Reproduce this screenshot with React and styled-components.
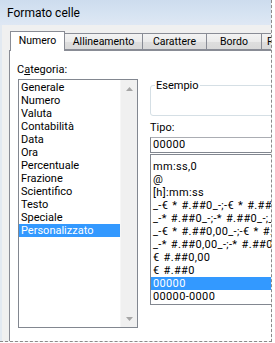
import React from "react";
import styled, { createGlobalStyle } from "styled-components";

const Global = createGlobalStyle`
  html, body { margin: 0; padding: 0; background: #fff; }
  body { font-family: Roboto, "Noto Sans", sans-serif; color: #000; }
  * { box-sizing: border-box; }
`;

const Frame = styled.div`
  width: 272px;
  height: 342px;
  border-right: 1px dashed #8a8a8a;
  border-bottom: 1px dashed #8a8a8a;
  overflow: hidden;
  display: flex;
  flex-direction: column;
  background: #f0f0f0;
`;

const TitleBar = styled.div`
  height: 25px;
  flex: none;
  display: flex;
  align-items: center;
  padding-left: 7px;
  font-size: 12px;
  background: linear-gradient(180deg, #cddcee 0%, #d6e3f2 55%, #dfe8f4 100%);
`;

const Client = styled.div`
  flex: 1;
  display: flex;
  flex-direction: column;
  padding: 6px 0 0 7px;
  border-left: 2px solid #e2e9f1;
  min-height: 0;
`;

const TabRow = styled.div`
  display: flex;
  align-items: flex-end;
  height: 19px;
  padding-left: 1px;
  position: relative;
  z-index: 1;
`;

const Tab = styled.div`
  flex: none;
  width: ${(p) => p.$w}px;
  height: ${(p) => (p.$active ? 20 : 17)}px;
  margin-bottom: ${(p) => (p.$active ? -1 : 0)}px;
  margin-left: ${(p) => (p.$first ? 0 : -1)}px;
  border: 1px solid #898c95;
  border-bottom: ${(p) => (p.$active ? "none" : "1px solid #898c95")};
  background: ${(p) =>
    p.$active
      ? "#fff"
      : "linear-gradient(180deg, #f3f3f3 0%, #ebebeb 50%, #dedede 51%, #d9d9d9 100%)"};
  display: flex;
  align-items: center;
  justify-content: center;
  padding-bottom: ${(p) => (p.$active ? 2 : 0)}px;
  font-size: 10.5px;
  white-space: nowrap;
  overflow: hidden;
`;

const Panel = styled.div`
  flex: 1;
  background: #fff;
  border-top: 1px solid #898c95;
  border-left: 1px solid #898c95;
  display: flex;
  align-items: flex-start;
  padding-left: 8px;
  gap: 12px;
`;

const LeftCol = styled.div`
  width: 120px;
  flex: none;
  padding-top: 12px;
  display: flex;
  flex-direction: column;
`;

const Label = styled.div`
  font-size: 11px;
  line-height: 13px;
  height: 13px;
  margin-left: ${(p) => p.$indent || 0}px;
  margin-top: ${(p) => p.$mt || 0}px;
`;

const Key = styled.span`
  text-decoration: underline;
`;

const ListBox = styled.div`
  margin-top: ${(p) => p.$mt}px;
  height: ${(p) => p.$h}px;
  border: 1px solid #828790;
  display: flex;
  background: #fff;
`;

const Items = styled.div`
  flex: 1;
  padding-top: ${(p) => p.$pt}px;
  overflow: hidden;
  letter-spacing: ${(p) => (p.$wide ? "0.35px" : "normal")};
  word-spacing: ${(p) => (p.$wide ? "1px" : "normal")};
`;

const Item = styled.div`
  height: 13px;
  line-height: 13px;
  font-size: 11px;
  padding-left: 2px;
  white-space: pre;
  background: ${(p) => (p.$sel ? "#3399ff" : "transparent")};
  color: ${(p) => (p.$sel ? "#fff" : "#000")};
`;

const ScrollBar = styled.div`
  width: 17px;
  flex: none;
  background: #f0f0f0;
  border-left: 1px solid #f6f6f6;
  display: flex;
  flex-direction: column;
  justify-content: space-between;
`;

const Arrow = styled.div`
  height: 17px;
  display: flex;
  align-items: center;
  justify-content: center;
`;

const RightCol = styled.div`
  flex: none;
  width: 170px;
  padding-top: 34px;
  display: flex;
  flex-direction: column;
`;

const Group = styled.div`
  position: relative;
  height: 31px;
  border: 1px solid #d5dfe5;
  border-radius: 3px;
`;

const GroupTitle = styled.span`
  position: absolute;
  left: 4px;
  top: -7px;
  padding: 0 1px;
  background: #fff;
  font-size: 11px;
  line-height: 13px;
`;

const Input = styled.div`
  margin-top: 3px;
  height: 16px;
  border: 1px solid #828790;
  border-top-color: #abadb3;
  font-size: 11px;
  line-height: 14px;
  padding-left: 2px;
  letter-spacing: 0.3px;
`;

const Tri = ({ up }) => (
  <svg width="7" height="4" viewBox="0 0 7 4">
    <polygon points={up ? "0,4 7,4 3.5,0" : "0,0 7,0 3.5,4"} fill="#a6a6a6" />
  </svg>
);

const categories = [
  "Generale",
  "Numero",
  "Valuta",
  "Contabilità",
  "Data",
  "Ora",
  "Percentuale",
  "Frazione",
  "Scientifico",
  "Testo",
  "Speciale",
  "Personalizzato",
];

const formats = [
  "mm:ss,0",
  "@",
  "[h]:mm:ss",
  "_-€ * #.##0_-;-€ * #.##0_-;_-€ * \"-\"_-;_-@_-",
  "_-* #.##0_-;-* #.##0_-;_-* \"-\"_-;_-@_-",
  "_-€ * #.##0,00_-;-€ * #.##0,00_-;_-€ * \"-\"??_-;_-@_-",
  "_-* #.##0,00_-;-* #.##0,00_-;_-* \"-\"??_-;_-@_-",
  "€ #.##0,00",
  "€ #.##0",
  "00000",
  "00000-0000",
];

const tabs = [
  { label: "Numero", w: 55, active: true },
  { label: "Allineamento", w: 79 },
  { label: "Carattere", w: 65 },
  { label: "Bordo", w: 56 },
  { label: "Riempimento", w: 74 },
];

export default function App() {
  return (
    <>
      <Global />
      <Frame>
        <TitleBar>Formato celle</TitleBar>
        <Client>
          <TabRow>
            {tabs.map((t, i) => (
              <Tab key={t.label} $w={t.w} $active={t.active} $first={i === 0}>
                {t.label}
              </Tab>
            ))}
          </TabRow>
          <Panel>
            <LeftCol>
              <Label $indent={-1}>
                C<Key>a</Key>tegoria:
              </Label>
              <ListBox $mt={3} $h={249}>
                <Items $pt={1}>
                  {categories.map((c) => (
                    <Item key={c} $sel={c === "Personalizzato"}>
                      {c}
                    </Item>
                  ))}
                </Items>
                <ScrollBar>
                  <Arrow>
                    <Tri up />
                  </Arrow>
                  <Arrow>
                    <Tri />
                  </Arrow>
                </ScrollBar>
              </ListBox>
            </LeftCol>
            <RightCol>
              <Group>
                <GroupTitle>Esempio</GroupTitle>
              </Group>
              <Label $mt={5}>Tipo:</Label>
              <Input>00000</Input>
              <ListBox $mt={1} $h={151}>
                <Items $pt={5} $wide>
                  {formats.map((f) => (
                    <Item key={f} $sel={f === "00000"}>
                      {f}
                    </Item>
                  ))}
                </Items>
              </ListBox>
            </RightCol>
          </Panel>
        </Client>
      </Frame>
    </>
  );
}
